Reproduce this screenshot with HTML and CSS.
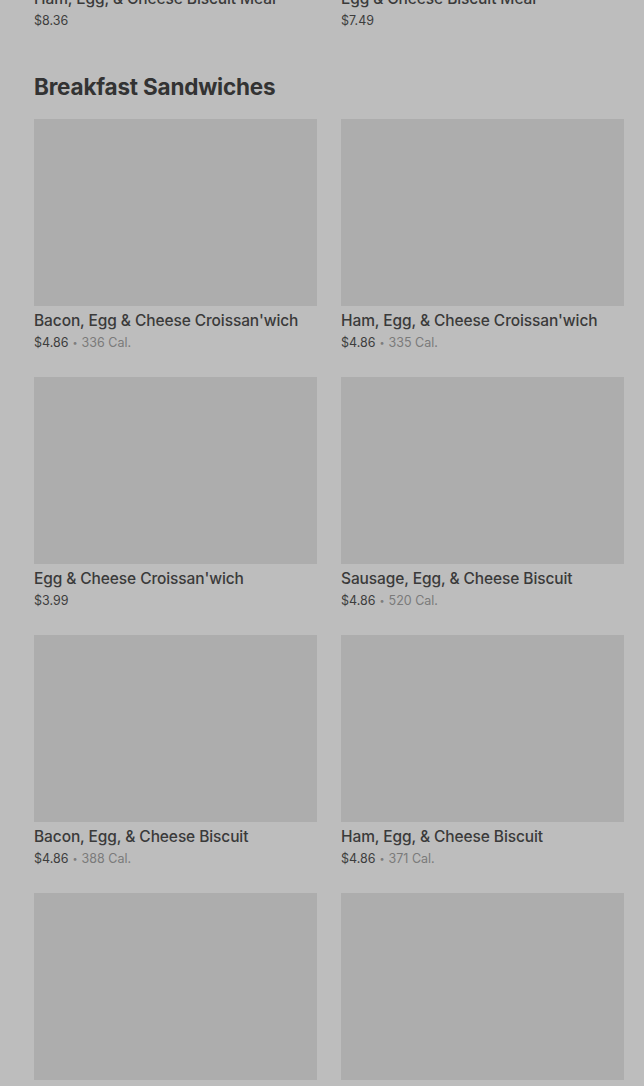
FILE: index.html
```html
<!DOCTYPE html>
<html lang="en">
<head>
  <meta charset="UTF-8">
  <title>Menu</title>
  <link rel="stylesheet" href="styles.css">
</head>
<body>

<div class="page">
  <div class="grid prev">
    <div class="item">
      <div class="name">Ham, Egg, &amp; Cheese Biscuit Meal</div>
      <div class="meta"><span class="price">$8.36</span></div>
    </div>
    <div class="item">
      <div class="name">Egg &amp; Cheese Biscuit Meal</div>
      <div class="meta"><span class="price">$7.49</span></div>
    </div>
  </div>

  <h2 class="section-title">Breakfast Sandwiches</h2>

  <div class="grid">
    <div class="item">
      <div class="photo"></div>
      <div class="name">Bacon, Egg &amp; Cheese Croissan'wich</div>
      <div class="meta"><span class="price">$4.86</span><span class="dot">•</span><span class="cal">336 Cal.</span></div>
    </div>
    <div class="item">
      <div class="photo"></div>
      <div class="name">Ham, Egg, &amp; Cheese Croissan'wich</div>
      <div class="meta"><span class="price">$4.86</span><span class="dot">•</span><span class="cal">335 Cal.</span></div>
    </div>
    <div class="item">
      <div class="photo"></div>
      <div class="name">Egg &amp; Cheese Croissan'wich</div>
      <div class="meta"><span class="price">$3.99</span></div>
    </div>
    <div class="item">
      <div class="photo"></div>
      <div class="name">Sausage, Egg, &amp; Cheese Biscuit</div>
      <div class="meta"><span class="price">$4.86</span><span class="dot">•</span><span class="cal">520 Cal.</span></div>
    </div>
    <div class="item">
      <div class="photo"></div>
      <div class="name">Bacon, Egg, &amp; Cheese Biscuit</div>
      <div class="meta"><span class="price">$4.86</span><span class="dot">•</span><span class="cal">388 Cal.</span></div>
    </div>
    <div class="item">
      <div class="photo"></div>
      <div class="name">Ham, Egg, &amp; Cheese Biscuit</div>
      <div class="meta"><span class="price">$4.86</span><span class="dot">•</span><span class="cal">371 Cal.</span></div>
    </div>
    <div class="item">
      <div class="photo"></div>
    </div>
    <div class="item">
      <div class="photo"></div>
    </div>
  </div>
</div>

</body>
</html>
```

FILE: styles.css
```css
html, body {
  margin: 0;
  padding: 0;
  background: #bdbdbd;
  overflow: hidden;
}
body {
  font-family: Inter, "Noto Sans", sans-serif;
  color: #363636;
}
.page {
  padding: 0 20px 0 34px;
}
.grid {
  display: grid;
  grid-template-columns: 283px 283px;
  column-gap: 24px;
  row-gap: 25px;
}
.prev {
  margin-top: -12px;
}
.item {
  display: flex;
  flex-direction: column;
}
.photo {
  height: 187px;
  background: #adadad;
  margin-bottom: 4px;
}
.name {
  font-size: 15.5px;
  line-height: 22px;
  font-weight: 500;
  color: #3a3a3a;
  white-space: nowrap;
  letter-spacing: -0.1px;
}
.meta {
  margin-top: 2px;
  font-size: 12.5px;
  line-height: 18px;
  color: #3d3d3d;
  display: flex;
  align-items: center;
}
.dot {
  color: #7d7d7d;
  font-size: 9px;
  margin: 0 4px;
}
.cal {
  color: #7a7a7a;
}
.section-title {
  margin: 43px 0 18px;
  font-size: 22.5px;
  line-height: 28px;
  font-weight: 700;
  color: #333;
  letter-spacing: -0.2px;
}
```
